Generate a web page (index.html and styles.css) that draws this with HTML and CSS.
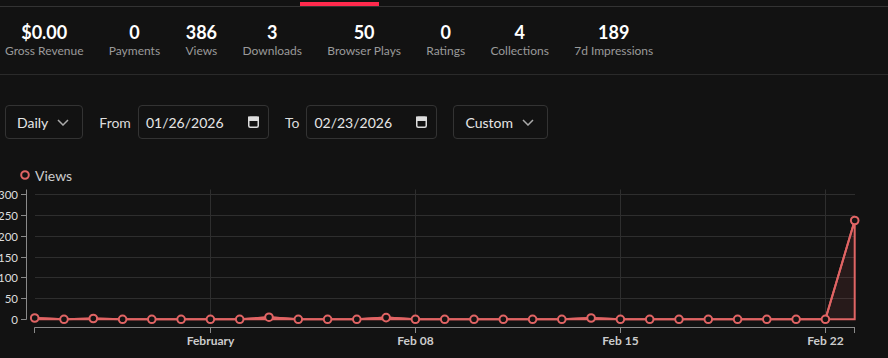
FILE: index.html
```html
<!DOCTYPE html>
<html lang="en">
<head>
    <meta charset="UTF-8">
    <meta name="viewport" content="width=device-width, initial-scale=1.0">
    <title>Analytics</title>
    <link rel="stylesheet" href="styles.css">
</head>
<body>
    <div class="tabs">
        <div class="tab-active"></div>
    </div>

    <div class="stats">
        <div class="stat"><div class="stat-value">$0.00</div><div class="stat-label">Gross Revenue</div></div>
        <div class="stat"><div class="stat-value">0</div><div class="stat-label">Payments</div></div>
        <div class="stat"><div class="stat-value">386</div><div class="stat-label">Views</div></div>
        <div class="stat"><div class="stat-value">3</div><div class="stat-label">Downloads</div></div>
        <div class="stat"><div class="stat-value">50</div><div class="stat-label">Browser Plays</div></div>
        <div class="stat"><div class="stat-value">0</div><div class="stat-label">Ratings</div></div>
        <div class="stat"><div class="stat-value">4</div><div class="stat-label">Collections</div></div>
        <div class="stat"><div class="stat-value">189</div><div class="stat-label">7d Impressions</div></div>
    </div>

    <div class="filters">
        <div class="select">
            <span>Daily</span>
            <svg class="chevron" width="12" height="7" viewBox="0 0 12 7"><polyline points="1,1 6,6 11,1"/></svg>
        </div>
        <div class="field">
            <span class="field-label">From</span>
            <div class="date">
                <span>01/26/2026</span>
                <svg class="cal" width="11" height="12" viewBox="0 0 11 12"><rect x="0.75" y="1.25" width="9.5" height="10" rx="1.5"/><rect class="cal-top" x="0.75" y="1.25" width="9.5" height="3"/></svg>
            </div>
        </div>
        <div class="field">
            <span class="field-label">To</span>
            <div class="date">
                <span>02/23/2026</span>
                <svg class="cal" width="11" height="12" viewBox="0 0 11 12"><rect x="0.75" y="1.25" width="9.5" height="10" rx="1.5"/><rect class="cal-top" x="0.75" y="1.25" width="9.5" height="3"/></svg>
            </div>
        </div>
        <div class="select">
            <span>Custom</span>
            <svg class="chevron" width="12" height="7" viewBox="0 0 12 7"><polyline points="1,1 6,6 11,1"/></svg>
        </div>
    </div>

    <div class="legend">
        <svg width="10" height="10" viewBox="0 0 10 10"><circle class="legend-dot" cx="5" cy="5" r="3.8"/></svg>
        <span>Views</span>
    </div>

    <svg class="chart" width="888" height="173" viewBox="0 0 888 173">
        <!-- grid -->
        <g class="grid">
            <line x1="35" y1="9.5" x2="855" y2="9.5"/>
            <line x1="35" y1="30.5" x2="855" y2="30.5"/>
            <line x1="35" y1="51.5" x2="855" y2="51.5"/>
            <line x1="35" y1="72.5" x2="855" y2="72.5"/>
            <line x1="35" y1="92.5" x2="855" y2="92.5"/>
            <line x1="35" y1="113.5" x2="855" y2="113.5"/>
            <line x1="35" y1="134.5" x2="855" y2="134.5"/>
            <line x1="210.5" y1="4.5" x2="210.5" y2="134.5"/>
            <line x1="415.5" y1="4.5" x2="415.5" y2="134.5"/>
            <line x1="620.5" y1="4.5" x2="620.5" y2="134.5"/>
            <line x1="825.5" y1="4.5" x2="825.5" y2="134.5"/>
        </g>

        <!-- y axis -->
        <g class="axis">
            <line x1="26.5" y1="4.5" x2="26.5" y2="134.5"/>
            <line x1="21" y1="9.5" x2="26.5" y2="9.5"/>
            <line x1="21" y1="30.5" x2="26.5" y2="30.5"/>
            <line x1="21" y1="51.5" x2="26.5" y2="51.5"/>
            <line x1="21" y1="72.5" x2="26.5" y2="72.5"/>
            <line x1="21" y1="92.5" x2="26.5" y2="92.5"/>
            <line x1="21" y1="113.5" x2="26.5" y2="113.5"/>
            <line x1="21" y1="134.5" x2="26.5" y2="134.5"/>
        </g>
        <g class="y-labels">
            <text x="18" y="13.5">300</text>
            <text x="18" y="34.5">250</text>
            <text x="18" y="55.5">200</text>
            <text x="18" y="76.5">150</text>
            <text x="18" y="96.5">100</text>
            <text x="18" y="117.5">50</text>
            <text x="18" y="138.5">0</text>
        </g>

        <!-- x axis -->
        <g class="axis">
            <line x1="34.5" y1="142.5" x2="855" y2="142.5"/>
            <line x1="34.5" y1="142.5" x2="34.5" y2="148"/>
            <line x1="210.5" y1="142.5" x2="210.5" y2="148"/>
            <line x1="415.5" y1="142.5" x2="415.5" y2="148"/>
            <line x1="620.5" y1="142.5" x2="620.5" y2="148"/>
            <line x1="825.5" y1="142.5" x2="825.5" y2="148"/>
            <line x1="854.5" y1="142.5" x2="854.5" y2="148"/>
        </g>
        <g class="x-labels">
            <text x="210.5" y="160">February</text>
            <text x="415.5" y="160">Feb 08</text>
            <text x="620.5" y="160">Feb 15</text>
            <text x="825.5" y="160">Feb 22</text>
        </g>

        <!-- series -->
        <polygon class="area" points="34.7,133 64,134.3 93.3,133.5 122.6,134.3 151.8,134.3 181.1,134.3 210.4,134.3 239.7,134.3 269,132.2 298.3,134.3 327.6,134.3 356.8,134.3 386.1,132.6 415.4,134.3 444.7,134.3 474,134.3 503.3,134.3 532.6,134.3 561.8,134.3 591.1,133 620.4,134.3 649.7,134.3 679,134.3 708.3,134.3 737.6,134.3 766.8,134.3 796.1,134.3 825.4,134.3 854.7,35.5 854.7,134.3 34.7,134.3"/>
        <polyline class="line" points="34.7,133 64,134.3 93.3,133.5 122.6,134.3 151.8,134.3 181.1,134.3 210.4,134.3 239.7,134.3 269,132.2 298.3,134.3 327.6,134.3 356.8,134.3 386.1,132.6 415.4,134.3 444.7,134.3 474,134.3 503.3,134.3 532.6,134.3 561.8,134.3 591.1,133 620.4,134.3 649.7,134.3 679,134.3 708.3,134.3 737.6,134.3 766.8,134.3 796.1,134.3 825.4,134.3 854.7,35.5"/>
        <g class="dots">
            <circle cx="34.7" cy="133" r="3.8"/>
            <circle cx="64" cy="134.3" r="3.8"/>
            <circle cx="93.3" cy="133.5" r="3.8"/>
            <circle cx="122.6" cy="134.3" r="3.8"/>
            <circle cx="151.8" cy="134.3" r="3.8"/>
            <circle cx="181.1" cy="134.3" r="3.8"/>
            <circle cx="210.4" cy="134.3" r="3.8"/>
            <circle cx="239.7" cy="134.3" r="3.8"/>
            <circle cx="269" cy="132.2" r="3.8"/>
            <circle cx="298.3" cy="134.3" r="3.8"/>
            <circle cx="327.6" cy="134.3" r="3.8"/>
            <circle cx="356.8" cy="134.3" r="3.8"/>
            <circle cx="386.1" cy="132.6" r="3.8"/>
            <circle cx="415.4" cy="134.3" r="3.8"/>
            <circle cx="444.7" cy="134.3" r="3.8"/>
            <circle cx="474" cy="134.3" r="3.8"/>
            <circle cx="503.3" cy="134.3" r="3.8"/>
            <circle cx="532.6" cy="134.3" r="3.8"/>
            <circle cx="561.8" cy="134.3" r="3.8"/>
            <circle cx="591.1" cy="133" r="3.8"/>
            <circle cx="620.4" cy="134.3" r="3.8"/>
            <circle cx="649.7" cy="134.3" r="3.8"/>
            <circle cx="679" cy="134.3" r="3.8"/>
            <circle cx="708.3" cy="134.3" r="3.8"/>
            <circle cx="737.6" cy="134.3" r="3.8"/>
            <circle cx="766.8" cy="134.3" r="3.8"/>
            <circle cx="796.1" cy="134.3" r="3.8"/>
            <circle cx="825.4" cy="134.3" r="3.8"/>
            <circle cx="854.7" cy="35.5" r="3.8"/>
        </g>
    </svg>
</body>
</html>
```

FILE: styles.css
```css
* {
    box-sizing: border-box;
    margin: 0;
    padding: 0;
}

body {
    font-family: Lato, "Liberation Sans", sans-serif;
    background: #121212;
    color: #ddd;
    height: 358px;
    overflow: hidden;
}

.tabs {
    height: 7px;
    border-bottom: 1px solid #333;
    display: flex;
    align-items: flex-end;
}

.tab-active {
    margin-left: 300px;
    width: 79px;
    height: 4px;
    background: #ff2a4d;
}

.stats {
    display: flex;
    gap: 25.3px;
    padding: 14px 0 16px 5px;
    border-bottom: 1px solid #2a2a2a;
}

.stat {
    text-align: center;
}

.stat-value {
    font-size: 18px;
    line-height: 22px;
    font-weight: 700;
    color: #fff;
}

.stat-label {
    font-size: 12px;
    line-height: 15px;
    color: #9a9a9a;
}

.filters {
    display: flex;
    align-items: center;
    gap: 16px;
    padding: 30px 0 0 5px;
    font-size: 14px;
}

.select, .date {
    height: 34px;
    border: 1px solid #333;
    border-radius: 4px;
    display: flex;
    align-items: center;
    color: #e6e6e6;
}

.select {
    gap: 9px;
    padding: 0 13px 0 11px;
}

.chevron polyline {
    fill: none;
    stroke: #aaa;
    stroke-width: 1.5;
}

.field {
    display: flex;
    align-items: center;
    gap: 7px;
}

.field-label {
    color: #ddd;
}

.date {
    width: 131px;
    justify-content: space-between;
    padding: 0 9px 0 7px;
}

.cal rect {
    fill: none;
    stroke: #ddd;
    stroke-width: 1.5;
}

.cal .cal-top {
    fill: #ddd;
}

.legend {
    display: flex;
    align-items: center;
    gap: 5px;
    height: 46px;
    padding: 26px 0 0 20px;
    font-size: 14px;
    color: #ccc;
}

.legend-dot {
    fill: none;
    stroke: #e06464;
    stroke-width: 2;
}

.chart {
    display: block;
}

.grid line {
    stroke: #2e2e2e;
    stroke-width: 1;
}

.axis line {
    stroke: #8a8a8a;
    stroke-width: 1;
}

.y-labels text {
    font-size: 11.5px;
    fill: #ddd;
    text-anchor: end;
}

.x-labels text {
    font-size: 12px;
    font-weight: 700;
    fill: #ccc;
    text-anchor: middle;
}

.area {
    fill: rgba(224, 100, 100, 0.1);
    stroke: #e06464;
    stroke-width: 2;
}

.line {
    fill: none;
    stroke: #e06464;
    stroke-width: 2;
}

.dots circle {
    fill: #121212;
    stroke: #e06464;
    stroke-width: 2;
}
```
